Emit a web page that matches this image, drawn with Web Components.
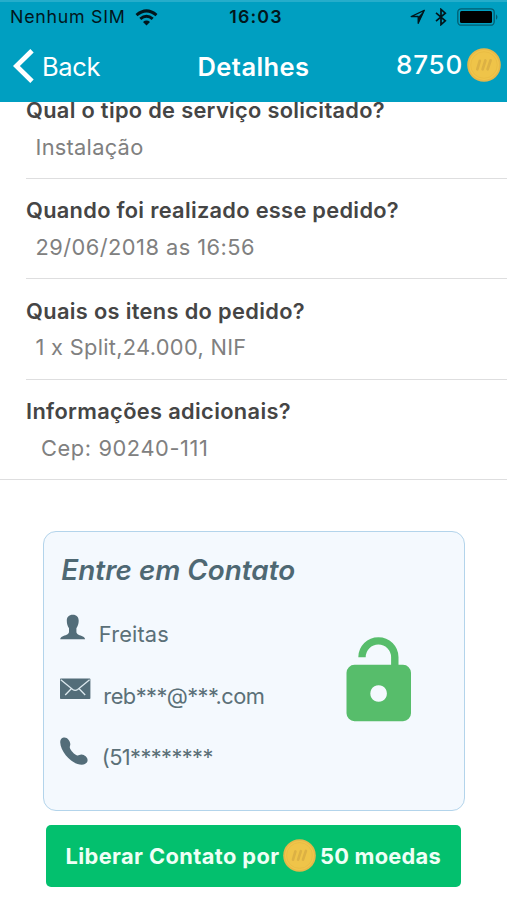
<!DOCTYPE html>
<html lang="pt">
<head>
<meta charset="utf-8">
<title>Detalhes</title>
<style>
html,body{margin:0;padding:0;background:#fff}
body{width:507px;height:900px;overflow:hidden;font-family:Inter,"Liberation Sans",sans-serif;font-optical-sizing:none;font-variation-settings:"opsz" 14}
</style>
</head>
<body>
<order-page></order-page>
<script>
function define(name, html, Base = HTMLElement) {
  customElements.define(name, class extends Base {
    constructor() {
      super();
      this.attachShadow({mode: 'open'}).innerHTML = html;
    }
  });
}

// One line of text, tracked so that it spans the given width.
class TrackedText extends HTMLElement {
  constructor() {
    super();
    this.attachShadow({mode: 'open'}).innerHTML =
      '<style>:host{display:block;white-space:pre;flex:none}span{display:inline-block}</style><span><slot></slot></span>';
  }
  connectedCallback() {
    const span = this.shadowRoot.querySelector('span');
    const target = +this.getAttribute('span');
    const n = this.textContent.length;
    if (target && n) {
      const natural = span.getBoundingClientRect().width;
      span.style.letterSpacing = ((target - natural) / n).toFixed(3) + 'px';
    }
  }
}

define('coin-icon', `<style>:host{display:block;flex:none;width:34px;height:34px}svg{display:block;width:100%;height:100%}</style>
<svg viewBox="0 0 34 34"><circle cx="17" cy="17" r="16.8" fill="#e6b848"/><circle cx="17" cy="17" r="15" fill="#f0c54b"/><circle cx="17" cy="17" r="13.3" fill="#efc449" stroke="#e8bb43" stroke-width=".8"/>
<path d="M10.3 21.3 12.8 12.8M15.6 21.3 18.4 12.5M20.6 21.3 23.6 12.3" fill="none" stroke="#dcb144" stroke-width="2.7" stroke-linecap="round"/></svg>`);

define('status-bar', `<style>
:host{display:grid;grid-template-columns:1fr auto 1fr;align-items:center;height:34px;color:#02161c;font-size:17.8px;line-height:24px}
.l,.r{display:flex;align-items:center}.l{padding-left:10px;gap:9px}.r{justify-content:flex-end;padding-right:8px}
.t{font-weight:600;padding-left:5px}svg{display:block;flex:none}</style>
<div class="l"><tracked-text span="115.5">Nenhum SIM</tracked-text>
<svg width="23" height="17" viewBox="0 0 23 17" fill="none" stroke="#02161c" stroke-width="3"><path d="M1.5 6.1Q11.5-2.3 21.5 6.1M5.3 9.9Q11.5 4.7 17.7 9.9"/><path d="M8 12.9Q11.5 10 15 12.9L11.5 16.5Z" fill="#02161c" stroke="none"/></svg></div>
<tracked-text class="t" span="53.5">16:03</tracked-text>
<div class="r">
<svg width="16" height="16" viewBox="0 0 16 16" style="margin-right:9px"><path d="M14.3 1.3 1.2 7.5H8.2V14.3Z" fill="none" stroke="#02161c" stroke-width="1.3" stroke-linejoin="round"/><path d="M14.8.8 8 8.2V15Z" fill="#02161c"/></svg>
<svg width="12" height="18" viewBox="0 0 12 18" style="margin-right:10px"><path d="M1 4.8 10.3 12.8 6 16.6V1.4L10.3 5.2 1 13.2" fill="none" stroke="#02161c" stroke-width="1.7"/></svg>
<svg width="42" height="18" viewBox="0 0 42 18"><rect x=".8" y=".8" width="36.4" height="16.4" rx="3.5" fill="none" stroke="#035d70" stroke-width="1.3"/><rect x="3" y="3" width="32" height="12" rx="1.5" fill="#000"/><path d="M39 6.2Q42 9 39 11.8Z" fill="#035d70"/></svg>
</div>`);

define('nav-bar', `<style>
:host{display:grid;grid-template-columns:1fr auto 1fr;align-items:center;height:68px;color:#fff;line-height:34px}
.b,.c{display:flex;align-items:center}.b{padding-left:13px;gap:8px;font-size:25.5px}.c{justify-content:flex-end;gap:4px;padding:0 6px 6px 0;font-size:26px;font-weight:550}
.t{font-size:25.5px;font-weight:600}svg{display:block}.b tracked-text,.t{padding-bottom:2px}</style>
<div class="b"><svg width="21" height="34" viewBox="0 0 21 34" style="margin-bottom:4px"><path d="M19 1.7 3.4 17 19 32.3" fill="none" stroke="#fff" stroke-width="4.8"/></svg><tracked-text span="58">Back</tracked-text></div>
<tracked-text class="t" span="112">Detalhes</tracked-text>
<div class="c"><tracked-text span="67">8750</tracked-text><coin-icon></coin-icon></div>`);

define('detail-row', `<style>
:host{display:block;box-sizing:border-box;height:100.4px;margin-left:26px;padding-top:16.5px;border-bottom:1.6px solid #dededf;font-size:21.8px;line-height:30px}
:host([last]){margin-left:0;padding-left:26px}
.q{font-weight:620;color:#454545}.a{padding:6.6px 0 0 9.5px;color:#808080;font-weight:420}:host([last]) .a{padding-left:15px}</style>
<div class="q"><slot name="question"></slot></div><div class="a"><slot></slot></div>`);

define('contact-row', `<style>
:host{display:flex;height:61.7px;color:#5b7078;font-size:21.8px;line-height:30px}
.i{width:var(--text-x,38.5px);flex:none;padding-top:2px}.v{padding-top:7px}</style>
<div class="i"><slot name="icon"></slot></div><div class="v"><slot></slot></div>`);

define('contact-card', `<style>
:host{display:block;position:relative;box-sizing:border-box;width:422px;height:280px;margin:50.5px 0 0 43px;padding:19px 0 0 16.3px;border:1.6px solid #b3d4eb;border-radius:13px;background:#f4f9fe}
h2{margin:0;padding-left:1px;font-style:italic;font-weight:600;font-size:27.8px;line-height:38px;color:#4e6873}
.body{display:flex;justify-content:space-between;padding-top:23.5px}
svg{display:block}.lock{margin:24px 52px 0 0;flex:none}</style>
<h2><tracked-text span="234">Entre em Contato</tracked-text></h2>
<div class="body"><div>
<contact-row><svg slot="icon" width="26" height="27" viewBox="0 0 26 27"><path d="M12.8.8C8.8.8 6.7 3.3 6.8 6.7 6.9 9.8 7.4 12 9 14.2V18C9 20.5 5 21.2 2.4 22.5.9 23.3.3 24 .2 25.3H25.1C25 24 24.3 23.2 22.8 22.5 20.2 21.2 16.4 20.5 16.4 18V14.2C17.9 12 18.6 9.8 18.7 6.7 18.7 3.2 16.7.8 12.8.8Z" fill="#536d79"/></svg><tracked-text span="70">Freitas</tracked-text></contact-row>
<contact-row style="--text-x:43px"><svg slot="icon" width="31" height="24" viewBox="0 0 31 24"><rect y="2.6" width="30.4" height="20.4" rx=".8" fill="#536d79"/><path d="M.8 3.8 12.7 13.5Q15.2 15.3 17.7 13.5L29.6 3.8M5.2 19 11.5 12.5M25.2 19 18.9 12.5" fill="none" stroke="#dce8ee" stroke-width="1.3"/></svg><tracked-text span="161">reb***@***.com</tracked-text></contact-row>
<contact-row style="--text-x:41.5px"><svg slot="icon" width="29" height="29" viewBox="0 0 29 29"><path d="M3.6.5C1.4 1 .1 2.9.2 5.2.5 15 12.2 27.8 21.8 27.8 24.9 27.8 27.5 25.7 27.6 23.2 27.6 20.5 24.6 17.8 21.6 17.6 19.4 17.5 18.8 18.8 17.2 18.4 14.5 17.7 10.6 13.4 9.9 11 9.5 9.4 10.4 8.8 10.3 7 10.2 3.8 7-.3 3.6.5Z" fill="#536d79"/></svg><tracked-text span="111">(51********</tracked-text></contact-row>
</div>
<svg class="lock" width="66" height="86" viewBox="0 0 66 86"><path d="M16 21.3A16.4 16.4 0 0 1 48.8 21.3V31" fill="none" stroke="#57bd6b" stroke-width="7.4"/><path fill-rule="evenodd" fill="#57bd6b" d="M8.5 28.8H57A8 8 0 0 1 65 36.8V77.2A8 8 0 0 1 57 85.2H8.5A8 8 0 0 1 .5 77.2V36.8A8 8 0 0 1 8.5 28.8ZM32.6 49.2a8.3 8.3 0 1 0 .01 0Z"/></svg>
</div>`);

define('unlock-button', `<style>
:host{display:flex;align-items:center;justify-content:center;box-sizing:border-box;width:414.5px;height:62px;margin:14px 0 0 46px;border-radius:5px;background:#03c06e;color:#effff6;font-size:21.8px;font-weight:650;line-height:30px}
coin-icon{width:33px;height:33px;margin:0 4px 0 3.5px}</style>
<tracked-text span="214">Liberar Contato por</tracked-text><coin-icon></coin-icon><tracked-text span="121">50 moedas</tracked-text>`);

define('order-page', `<style>
:host{display:flex;flex-direction:column;width:507px;height:900px;overflow:hidden;background:#fff}
header{flex:none;height:102px;background:#009fc1;box-shadow:inset 0 2px #25adcb;position:relative;z-index:1}
main{flex:none;margin-top:-23.5px}</style>
<header><status-bar></status-bar><nav-bar></nav-bar></header>
<main>
<detail-row><tracked-text slot="question" span="359">Qual o tipo de serviço solicitado?</tracked-text><tracked-text span="108">Instalação</tracked-text></detail-row>
<detail-row><tracked-text slot="question" span="373">Quando foi realizado esse pedido?</tracked-text><tracked-text span="219.5">29/06/2018 as 16:56</tracked-text></detail-row>
<detail-row><tracked-text slot="question" span="279">Quais os itens do pedido?</tracked-text><tracked-text span="211">1 x Split,24.000, NIF</tracked-text></detail-row>
<detail-row last><tracked-text slot="question" span="265">Informações adicionais?</tracked-text><tracked-text span="167.5">Cep: 90240-111</tracked-text></detail-row>
<contact-card></contact-card>
<unlock-button></unlock-button>
</main>`);

customElements.define('tracked-text', TrackedText);
</script>
</body>
</html>
